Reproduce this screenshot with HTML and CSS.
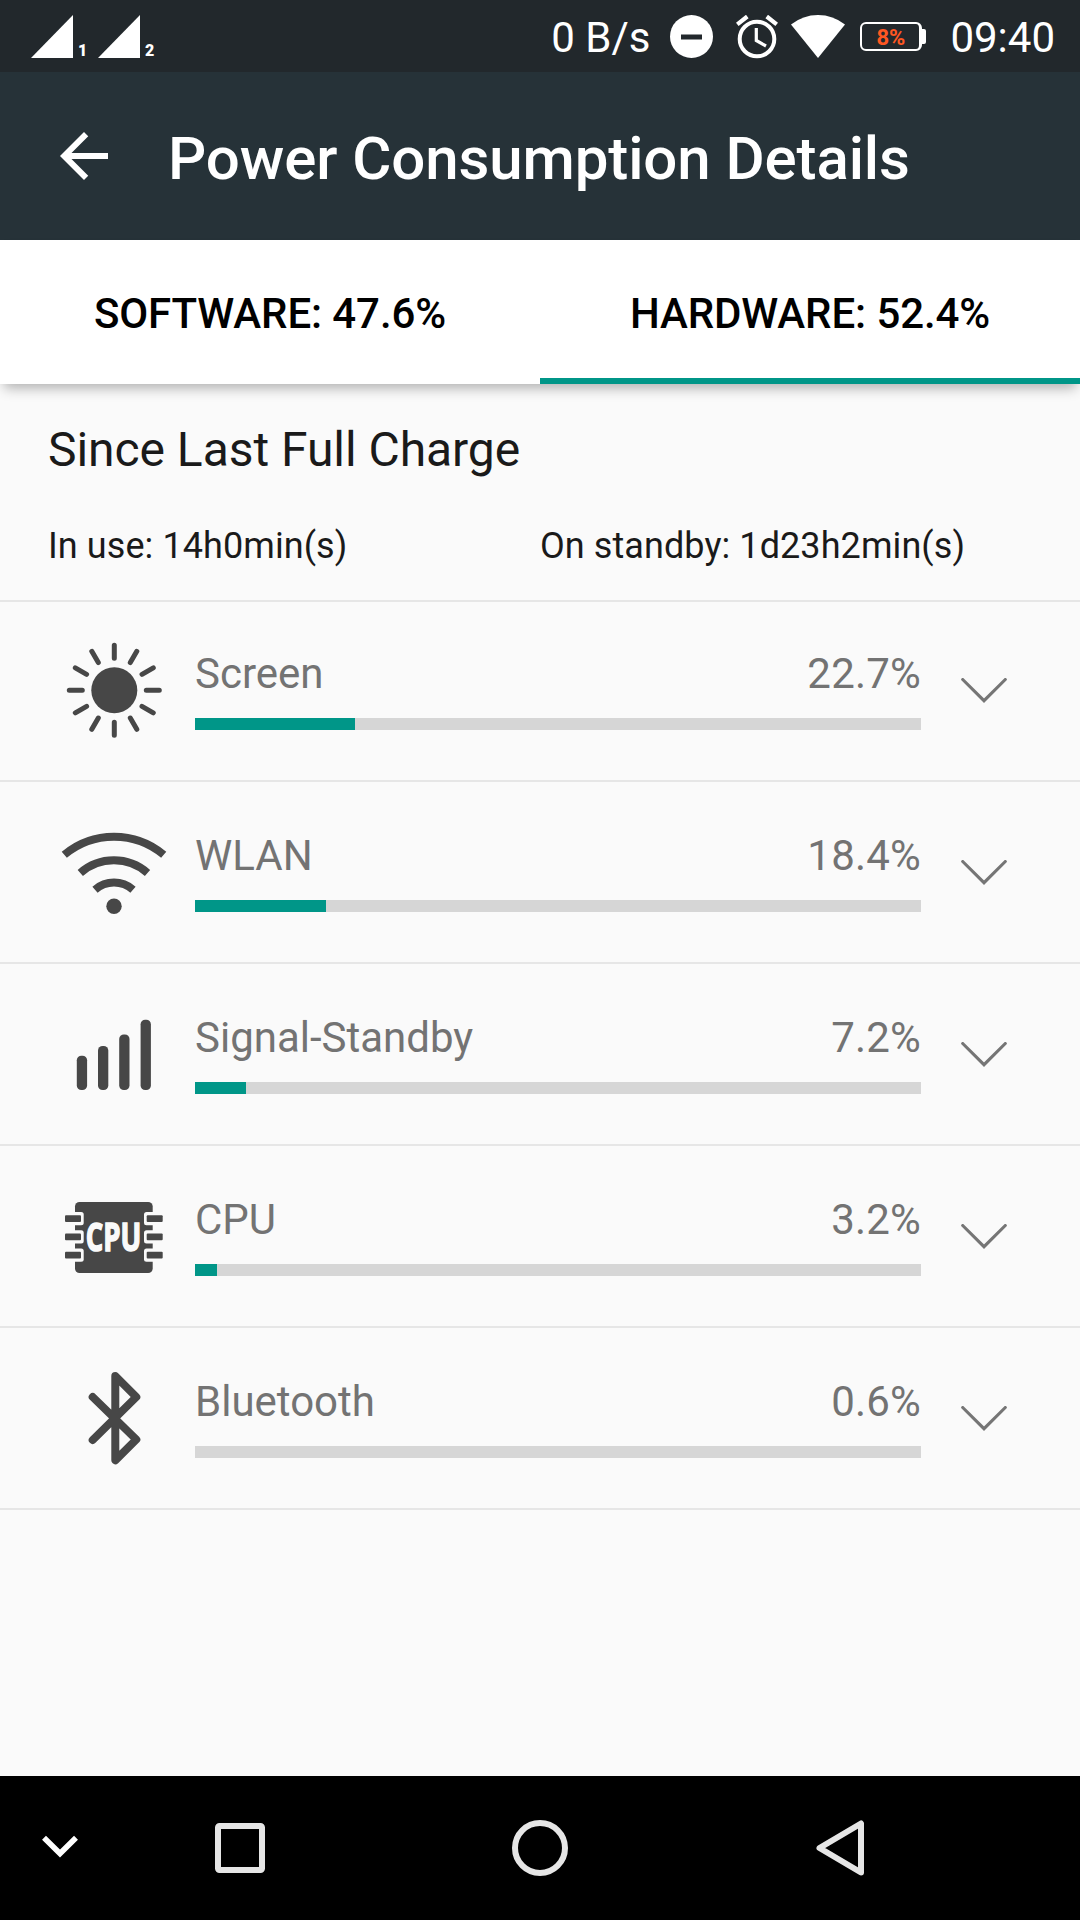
FILE: index.html
```html
<!DOCTYPE html>
<html lang="en">
<head>
    <meta charset="UTF-8">
    <meta name="viewport" content="width=device-width, initial-scale=1.0">
    <title>Power Consumption Details</title>
    <link rel="stylesheet" href="styles.css">
</head>
<body>
    <div class="status-bar">
        <div class="signal">
            <svg width="42" height="43" viewBox="0 0 42 43"><path d="M0 43L42 0V43Z" fill="#fff"/></svg>
            <span>1</span>
        </div>
        <div class="signal">
            <svg width="42" height="43" viewBox="0 0 42 43"><path d="M0 43L42 0V43Z" fill="#fff"/></svg>
            <span>2</span>
        </div>
        <span class="speed">0 B/s</span>
        <svg class="dnd" width="43" height="43" viewBox="0 0 43 43">
            <circle cx="21.5" cy="21.5" r="21.5" fill="#fff"/>
            <rect class="dnd-bar" x="11" y="19.5" width="21" height="5"/>
        </svg>
        <svg class="alarm" width="42" height="43" viewBox="0 0 42 43" fill="none" stroke="#fff">
            <circle cx="21" cy="24" r="17.3" stroke-width="4"/>
            <path d="M20.3 13V25.5L30 31" stroke-width="3.2"/>
            <path d="M1.3 9.3L11.3 1.5M40.7 9.3L30.7 1.5" stroke-width="4.2"/>
        </svg>
        <svg class="wifi" width="54" height="43" viewBox="0 0 54 43"><path d="M0 9.5Q12 0 27 0T54 9.5L27 43Z" fill="#fff"/></svg>
        <div class="battery"><span>8%</span></div>
        <span class="time">09:40</span>
    </div>

    <header class="app-bar">
        <svg width="72" height="72" viewBox="0 0 24 24"><path d="M20 11H7.83l5.59-5.59L12 4l-8 8 8 8 1.41-1.41L7.83 13H20v-2z" fill="#fff"/></svg>
        <h1>Power Consumption Details</h1>
    </header>

    <nav class="tabs">
        <div class="tab">SOFTWARE: 47.6%</div>
        <div class="tab active">HARDWARE: 52.4%</div>
    </nav>

    <section class="summary">
        <h2>Since Last Full Charge</h2>
        <div class="times">
            <span>In use: 14h0min(s)</span>
            <span>On standby: 1d23h2min(s)</span>
        </div>
    </section>

    <main class="list">
        <div class="row">
            <svg class="icon" viewBox="0 0 104 104">
                <circle cx="52.3" cy="51.3" r="23"/>
                <g class="line" stroke-width="5">
                    <path id="rays" d="M52.3 19.3V6.3M52.3 83.3V96.3M20.3 51.3H7.3M84.3 51.3H97.3"/>
                    <use href="#rays" transform="rotate(30 52.3 51.3)"/>
                    <use href="#rays" transform="rotate(60 52.3 51.3)"/>
                </g>
            </svg>
            <div class="usage">
                <div class="label"><span>Screen</span><span class="percent">22.7%</span></div>
                <div class="bar"><div class="fill" style="width: 22%"></div></div>
            </div>
            <svg class="chevron" viewBox="0 0 46 26"><path d="M1.7 1.5L23 22.7L44.3 1.5"/></svg>
        </div>

        <div class="row">
            <svg class="icon" viewBox="0 0 104 104">
                <g fill="none" stroke="#474747" stroke-width="8">
                    <path d="M2.3 33.7A77.5 77.5 0 0 1 101.7 33.7"/>
                    <path d="M18.3 51.9A51 51 0 0 1 85.5 51.9"/>
                    <path d="M33 68.7A29 29 0 0 1 71 68.7"/>
                </g>
                <circle cx="52" cy="85.3" r="7.7"/>
            </svg>
            <div class="usage">
                <div class="label"><span>WLAN</span><span class="percent">18.4%</span></div>
                <div class="bar"><div class="fill" style="width: 18%"></div></div>
            </div>
            <svg class="chevron" viewBox="0 0 46 26"><path d="M1.7 1.5L23 22.7L44.3 1.5"/></svg>
        </div>

        <div class="row">
            <svg class="icon" viewBox="0 0 104 104">
                <rect x="14.8" y="52.7" width="10.3" height="34.3" rx="4.6"/>
                <rect x="36" y="43" width="10.3" height="44" rx="4.6"/>
                <rect x="57.2" y="31.5" width="10.3" height="55.5" rx="4.6"/>
                <rect x="78.6" y="16.7" width="10.3" height="70.3" rx="4.6"/>
            </svg>
            <div class="usage">
                <div class="label"><span>Signal-Standby</span><span class="percent">7.2%</span></div>
                <div class="bar"><div class="fill" style="width: 7%"></div></div>
            </div>
            <svg class="chevron" viewBox="0 0 46 26"><path d="M1.7 1.5L23 22.7L44.3 1.5"/></svg>
        </div>

        <div class="row">
            <svg class="icon" viewBox="0 0 104 104">
                <rect x="13" y="17" width="77.7" height="71" rx="4.5"/>
                <!-- notches -->
                <g fill="#fafafa">
                    <rect x="5" y="27" width="16.7" height="13.2" rx="2.5"/>
                    <rect x="5" y="45.3" width="16.7" height="13.2" rx="2.5"/>
                    <rect x="5" y="63.6" width="16.7" height="13.2" rx="2.5"/>
                    <rect x="82" y="27" width="16.7" height="13.2" rx="2.5"/>
                    <rect x="82" y="45.3" width="16.7" height="13.2" rx="2.5"/>
                    <rect x="82" y="63.6" width="16.7" height="13.2" rx="2.5"/>
                </g>
                <!-- pins -->
                <rect x="3" y="30.2" width="16" height="6.8" rx="1"/>
                <rect x="3" y="48.5" width="16" height="6.8" rx="1"/>
                <rect x="3" y="66.8" width="16" height="6.8" rx="1"/>
                <rect x="84.7" y="30.2" width="16" height="6.8" rx="1"/>
                <rect x="84.7" y="48.5" width="16" height="6.8" rx="1"/>
                <rect x="84.7" y="66.8" width="16" height="6.8" rx="1"/>
                <text class="chip-text" x="23.8" y="66" textLength="55.5" lengthAdjust="spacingAndGlyphs">CPU</text>
            </svg>
            <div class="usage">
                <div class="label"><span>CPU</span><span class="percent">3.2%</span></div>
                <div class="bar"><div class="fill" style="width: 3%"></div></div>
            </div>
            <svg class="chevron" viewBox="0 0 46 26"><path d="M1.7 1.5L23 22.7L44.3 1.5"/></svg>
        </div>

        <div class="row">
            <svg class="icon" viewBox="0 0 104 104">
                <path class="line" stroke-width="8" d="M30.7 30L74.3 72.5L53.3 93.3V9L74.3 30L30.7 73"/>
            </svg>
            <div class="usage">
                <div class="label"><span>Bluetooth</span><span class="percent">0.6%</span></div>
                <div class="bar"><div class="fill" style="width: 0%"></div></div>
            </div>
            <svg class="chevron" viewBox="0 0 46 26"><path d="M1.7 1.5L23 22.7L44.3 1.5"/></svg>
        </div>
    </main>

    <footer class="nav-bar">
        <svg viewBox="0 0 60 60"><path d="M14 19.7L30 35.5L46 19.7" stroke="#fff" stroke-width="5.6"/></svg>
        <svg viewBox="0 0 60 60"><rect x="8" y="8" width="44" height="44" rx="1.5" stroke-width="6"/></svg>
        <svg viewBox="0 0 60 60"><circle cx="30" cy="30" r="25" stroke-width="6"/></svg>
        <svg viewBox="0 0 60 60"><path d="M9.5 30L51 5.5V54.5Z" stroke-width="6" stroke-linejoin="round"/></svg>
    </footer>
</body>
</html>
```

FILE: styles.css
```css
* {
    margin: 0;
    padding: 0;
    box-sizing: border-box;
}

body {
    width: 1080px;
    height: 1920px;
    display: flex;
    flex-direction: column;
    background: #fafafa;
    font-family: Roboto, sans-serif;
    overflow: hidden;
}

svg {
    display: block;
    flex-shrink: 0;
}

/* Status bar */
.status-bar {
    display: flex;
    align-items: center;
    height: 72px;
    padding: 0 25px 0 31px;
    background: #22282c;
    color: #fff;
    font-size: 42px;
    line-height: 50px;
}

.signal {
    display: flex;
    align-items: flex-end;
    width: 67px;
}

.signal span {
    margin-left: 5px;
    font-size: 16px;
    font-weight: 900;
    line-height: 14px;
}

.speed {
    margin-left: auto;
    padding-top: 4px;
}

.dnd {
    margin-left: 20px;
}

.dnd-bar {
    fill: #22282c;
}

.alarm {
    margin-left: 23px;
    overflow: visible;
}

.wifi {
    margin-left: 13px;
}

.battery {
    position: relative;
    width: 62px;
    height: 29px;
    margin: 0 28px 0 15px;
    border: 2px solid #fff;
    border-right-width: 3px;
    border-radius: 6px;
    color: #ff5722;
    font-size: 22px;
    font-weight: 700;
    line-height: 27px;
    text-align: center;
}

/* battery tip */
.battery::after {
    content: "";
    position: absolute;
    right: -7px;
    top: 5px;
    width: 5px;
    height: 15px;
    border-radius: 0 2px 2px 0;
    background: #fff;
}

.time {
    padding-top: 4px;
}

/* App bar */
.app-bar {
    display: flex;
    align-items: center;
    height: 168px;
    padding-left: 48px;
    background: #263238;
    color: #fff;
}

.app-bar h1 {
    margin-left: 48px;
    padding-top: 5px;
    font-size: 60px;
    font-weight: 500;
    line-height: 70px;
    letter-spacing: -0.1px;
}

/* Tabs */
.tabs {
    display: flex;
    height: 144px;
    background: #fff;
    box-shadow: 0 8px 12px -4px rgba(0, 0, 0, 0.3);
}

.tab {
    flex: 1;
    padding-top: 49px;
    color: #000;
    font-size: 42px;
    font-weight: 500;
    line-height: 50px;
    letter-spacing: -0.1px;
    text-align: center;
}

.tab.active {
    border-bottom: 6px solid #009688;
}

/* Summary */
.summary {
    height: 216px;
    padding: 38px 48px 0;
    color: #1a1a1a;
}

.summary h2 {
    font-size: 48px;
    font-weight: 400;
    line-height: 56px;
    letter-spacing: -0.05px;
}

.times {
    display: flex;
    margin-top: 47px;
    font-size: 36px;
    line-height: 42px;
    letter-spacing: 0.08px;
}

.times span {
    width: 492px;
}

/* Usage list */
.list {
    flex: 1;
    border-top: 2px solid #e6e6e6;
}

.row {
    display: flex;
    align-items: center;
    height: 182px;
    padding: 2px 0 0 62px;
    border-bottom: 2px solid #e6e6e6;
}

.row:first-child {
    height: 180px;
    padding-top: 0;
}

.icon {
    width: 104px;
    height: 104px;
    fill: #474747;
    overflow: visible;
}

.line {
    fill: none;
    stroke: #474747;
    stroke-linecap: round;
    stroke-linejoin: round;
}

.chip-text {
    fill: #fafafa;
    stroke: #fafafa;
    stroke-width: 1.6;
    font-family: "Open Sans", sans-serif;
    font-size: 40px;
    font-weight: 700;
}

.usage {
    width: 726px;
    margin: 0 40px 0 29px;
    padding-bottom: 3px;
}

.label {
    display: flex;
    justify-content: space-between;
    color: #737373;
    font-size: 42px;
    line-height: 50px;
}

.percent {
    letter-spacing: 0.2px;
}

.bar {
    height: 12px;
    margin-top: 19px;
    background: #d6d6d6;
}

.fill {
    height: 12px;
    background: #009688;
}

.chevron {
    width: 46px;
    height: 26px;
    fill: none;
    stroke: #757575;
    stroke-width: 3.1;
    stroke-linecap: round;
}

/* Navigation bar */
.nav-bar {
    display: grid;
    grid-template-columns: 120px 240px 360px 240px;
    place-items: center;
    height: 144px;
    background: #000;
}

.nav-bar svg {
    width: 60px;
    height: 60px;
    fill: none;
    stroke: #e6e6e6;
}
```
